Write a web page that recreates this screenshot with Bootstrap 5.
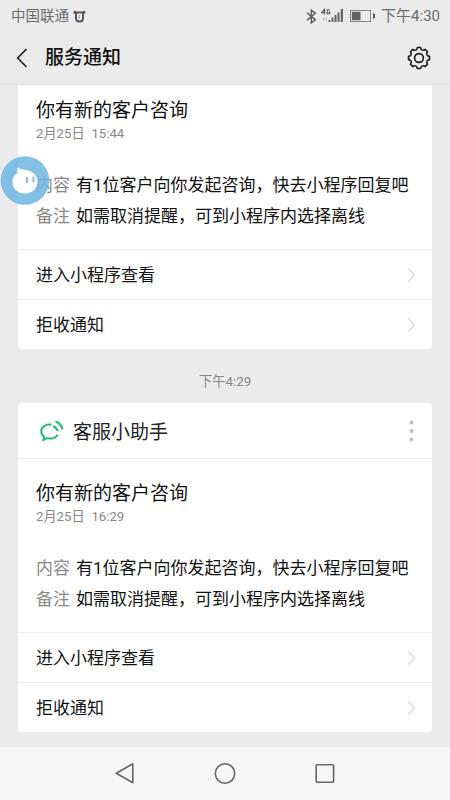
<!DOCTYPE html>
<html lang="zh-CN">
<head>
<meta charset="utf-8">
<meta name="viewport" content="width=device-width, initial-scale=1">
<title>服务通知</title>
<link href="https://cdn.jsdelivr.net/npm/bootstrap@5.3.0/dist/css/bootstrap.min.css" rel="stylesheet">
<style>
body{font-family:Roboto,"Noto Sans CJK SC",sans-serif;background:#ebebeb;color:#111;height:800px;overflow:hidden;font-size:17px}
svg{display:block;flex:none}
.status{height:32px;padding:0 10px 0 11px;font-size:14.5px;line-height:32px;color:#6a6a6a}
.status .operator{padding-top:1px}
.status .clock{font-size:15px;margin-left:5px}
.topbar{height:53px;padding:0 19px 0 16px;border-bottom:1px solid #e0e0e0}
.topbar h1{font-size:19px;line-height:52px;font-weight:500;margin-left:17px}
.notice{margin:0 18px;border:0;border-radius:4px}
.notice.cut{border-top-left-radius:0;border-top-right-radius:0}
.notice-head{height:56px;padding:0 17px 0 21px;border-bottom:1px solid #ededed;font-size:19px;color:#222}
.notice-head span{padding-top:5px}
.notice-body{height:173px;padding:21px 18px 0}
.cut .notice-body{height:164px;padding-top:12px}
.notice-title{font-size:19px;line-height:28px}
.notice-date{font-size:13.2px;line-height:18px;color:#888;word-spacing:3.500px}
.fields{margin-top:27px;line-height:31.400px}
.fields dt{font-weight:400;color:#888;width:40px}
.action{height:50px;padding:2px 16px 0 18px;border-top:1px solid #ededed;color:#111;text-decoration:none}
.action svg{margin-bottom:2px}
.stamp{height:54px;line-height:66px;font-size:13.300px;color:#888}
.sysnav{height:53px;background:#f6f6f6;gap:77px}
.bubble{left:0;top:155px}
</style>
<script src="https://cdn.jsdelivr.net/npm/bootstrap@5.3.0/dist/js/bootstrap.bundle.min.js"></script>
</head>
<body class="d-flex flex-column position-relative">
<svg width="0" height="0" class="position-absolute">
  <symbol id="chev" viewBox="0 0 9 16"><path d="M1.200 1.200 7.400 8l-6.200 6.800" fill="none" stroke="#dedede" stroke-width="1.600"/></symbol>
  <path id="tooth" d="M-3.270-7.900Q-1.900-8.400-1.600-10.500H1.600Q1.900-8.400 3.270-7.900"/>
</svg>

<div class="status d-flex align-items-center">
  <span class="operator">中国联通</span>
  <svg class="ms-1" width="13" height="13" viewBox="0 0 13 13" fill="none" stroke="#555"><path d="M3 2.500v5.500q0 3.500 3.500 3.500T10 8V2.500Z" stroke-width="2"/><path d="M6.500 5v3H5" stroke="#999" stroke-width=".8"/><path d="M.6 3 2.600 1.200M12.400 3 10.400 1.200" stroke-width="2"/></svg>
  <svg class="ms-auto" width="11" height="15" viewBox="0 0 11 15" fill="none" stroke="#5c5c5c" stroke-width="1.500"><path d="m1 3.800 8.300 7-3.900 3V1.200l3.900 3-8.300 7"/></svg>
  <svg class="ms-1" width="24" height="16" viewBox="0 0 24 16"><g fill="none" stroke="#555"><path d="M3.500 6.200V1.200L.6 4.600h3.600M8.800 1.700H6.200v4h2.500V4H7.500" stroke-width="1.100"/><path d="M2.500 9v4M5 9v4" stroke="#bbb"/></g><path d="M7.500 12h2v2h-2zm3-2.500h2V14h-2zm3-2.500h2v7h-2zm3-2.500h2V14h-2zm3.200-3.500h2.300v13h-2.300z" fill="#666"/></svg>
  <svg class="ms-1" width="27" height="14" viewBox="0 0 27 14"><rect x="1.500" y="1.500" width="20" height="11" fill="none" stroke="#888"/><path d="M2.800 2.800h8.700v8.400H2.800zM24 4.500h2v5h-2z" fill="#606060"/></svg>
  <span class="clock">下午4:30</span>
</div>

<header class="topbar d-flex align-items-center">
  <svg width="12" height="20" viewBox="0 0 12 20" fill="none" stroke="#222" stroke-width="1.700"><path d="M10.500 1 1.700 10l8.800 9"/></svg>
  <h1 class="mb-0">服务通知</h1>
  <svg class="ms-auto" width="24" height="24" viewBox="-12 -12 24 24" fill="none" stroke="#181818" stroke-width="1.600" stroke-linejoin="round">
    <use href="#tooth"/><use href="#tooth" transform="rotate(45)"/><use href="#tooth" transform="rotate(90)"/><use href="#tooth" transform="rotate(135)"/><use href="#tooth" transform="rotate(180)"/><use href="#tooth" transform="rotate(225)"/><use href="#tooth" transform="rotate(270)"/><use href="#tooth" transform="rotate(315)"/>
    <circle r="4.400"/>
  </svg>
</header>

<main class="flex-grow-1">
  <section class="notice card cut">
    <div class="notice-body">
      <div class="notice-title">你有新的客户咨询</div>
      <div class="notice-date">2月25日 15:44</div>
      <dl class="fields mb-0">
        <div class="d-flex"><dt>内容</dt><dd class="mb-0">有1位客户向你发起咨询，快去小程序回复吧</dd></div>
        <div class="d-flex"><dt>备注</dt><dd class="mb-0">如需取消提醒，可到小程序内选择离线</dd></div>
      </dl>
    </div>
    <a class="action d-flex align-items-center justify-content-between" href="#">进入小程序查看<svg width="9" height="16"><use href="#chev"/></svg></a>
    <a class="action d-flex align-items-center justify-content-between" href="#">拒收通知<svg width="9" height="16"><use href="#chev"/></svg></a>
  </section>

  <div class="stamp text-center">下午4:29</div>

  <section class="notice card">
    <div class="notice-head d-flex align-items-center">
      <svg width="26" height="24" viewBox="0 0 26 24" fill="none" stroke="#1fbf6b" stroke-width="2"><path d="M12.500 5.800C6.500 4.800 2.200 8 2.200 12.500c0 2.300 1.100 3.900 2.700 5.100l-.4 3.200 3.600-1.700c4.300 1.100 8.800-.2 10.600-3.400"/><path d="M14.300 7.200c2.200.9 3.700 2.500 4.300 4.700M16.500 2.500c3.700 1.300 6.200 4.200 7 7.900" stroke-width="2.200"/></svg>
      <span class="ms-2">客服小助手</span>
      <svg class="ms-auto" width="7" height="24" viewBox="0 0 7 24" fill="#bfbfbf"><circle cx="3.500" cy="3.500" r="2"/><circle cx="3.500" cy="12" r="2"/><circle cx="3.500" cy="20.500" r="2"/></svg>
    </div>
    <div class="notice-body">
      <div class="notice-title">你有新的客户咨询</div>
      <div class="notice-date">2月25日 16:29</div>
      <dl class="fields mb-0">
        <div class="d-flex"><dt>内容</dt><dd class="mb-0">有1位客户向你发起咨询，快去小程序回复吧</dd></div>
        <div class="d-flex"><dt>备注</dt><dd class="mb-0">如需取消提醒，可到小程序内选择离线</dd></div>
      </dl>
    </div>
    <a class="action d-flex align-items-center justify-content-between" href="#">进入小程序查看<svg width="9" height="16"><use href="#chev"/></svg></a>
    <a class="action d-flex align-items-center justify-content-between" href="#">拒收通知<svg width="9" height="16"><use href="#chev"/></svg></a>
  </section>
</main>

<nav class="sysnav d-flex align-items-center justify-content-center">
  <svg width="23" height="23" viewBox="0 0 23 23" fill="none" stroke="#666" stroke-width="1.600" stroke-linejoin="round"><path d="M18.800 1.800v19L2.300 11.300Z"/></svg>
  <svg width="23" height="23" viewBox="0 0 23 23" fill="none" stroke="#666" stroke-width="1.600"><circle cx="11" cy="11.500" r="9.700"/></svg>
  <svg width="23" height="23" viewBox="0 0 23 23" fill="none" stroke="#666" stroke-width="1.600"><rect x="2.200" y="2.700" width="17.400" height="17.600" rx="1"/></svg>
</nav>

<svg class="bubble position-absolute" width="50" height="50" viewBox="0 0 50 50">
  <circle cx="25" cy="25.500" r="24.300" fill="#6fb6e2" fill-opacity=".85"/>
  <path d="M18.300 12c.8 2.500 3.700 2.200 7.700 3 7 1.300 11.500 5.500 11.500 11.500 0 7-5.500 12-12.500 12-7.200 0-12.500-5-12.500-11.800 0-4.500 2.300-7.200 5-8.800-.6-2-.4-4.300.8-5.900Z" fill="#fff"/>
  <path d="M27 22v6M33.500 21.500v6" stroke="#7fc0e6" stroke-width="2" fill="none"/>
</svg>
</body>
</html>
